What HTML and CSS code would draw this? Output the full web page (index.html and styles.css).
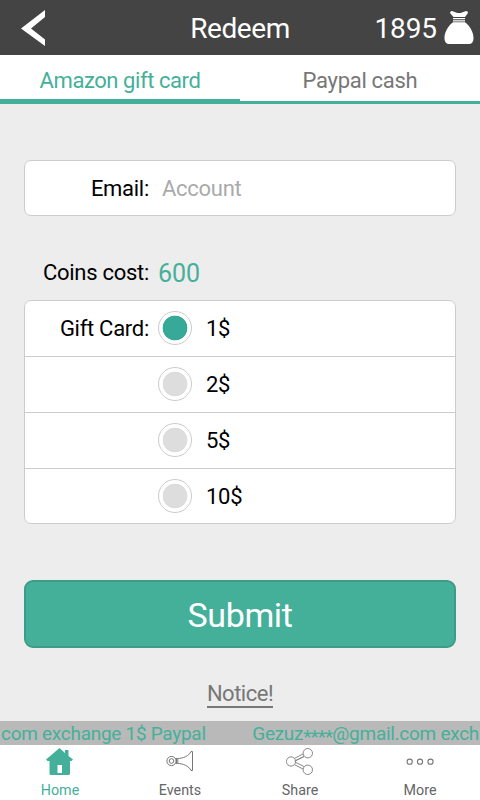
FILE: index.html
```html
<!DOCTYPE html>
<html lang="en">
<head>
<meta charset="utf-8">
<title>Redeem</title>
<link rel="stylesheet" href="styles.css">
</head>
<body>
<div class="app">
  <header class="header">
    <svg class="back" width="26" height="40" viewBox="0 0 26 40"><path d="M24 2v7L10 20.500l14 11V38L0 20.500z" fill="#fff"/></svg>
    <h1 class="title">Redeem</h1>
    <div class="balance">
      <span class="coins">1895</span>
      <svg width="30" height="34" viewBox="0 0 30 34" fill="#fff"><path d="M6 3Q6 1 8 1L12 2.500Q15 3.500 18 2.500L22 1Q24 1 24 3L21 7H9.500zM9 8h12v1.200H9zM9 10.200h12v1.300H9zM9 12.300H21C26 16 30 23 29.500 29Q29 34 25 34H5Q1 34 .5 29C0 23 4 16 9 12.300z"/></svg>
    </div>
  </header>
  <nav class="tabs">
    <a class="tab active"><span>Amazon gift card</span></a>
    <a class="tab"><span>Paypal cash</span></a>
  </nav>
  <main class="content">
    <div class="field">
      <span class="label">Email:</span><span class="placeholder">Account</span>
    </div>
    <div class="cost"><span class="label">Coins cost:</span><span class="amount">600</span></div>
    <div class="options">
      <div class="option"><span class="label">Gift Card:</span><i class="radio checked"></i><span>1$</span></div>
      <div class="option"><span class="label"></span><i class="radio"></i><span>2$</span></div>
      <div class="option"><span class="label"></span><i class="radio"></i><span>5$</span></div>
      <div class="option"><span class="label"></span><i class="radio"></i><span>10$</span></div>
    </div>
    <button class="submit"><span>Submit</span></button>
    <div class="notice"><span>Notice!</span></div>
  </main>
  <div class="ticker"><span class="entry">com exchange 1$ Paypal</span><span class="entry">Gezuz<span class="mask">****</span>@gmail.com exch</span></div>
  <footer class="bottom">
    <a class="item active">
      <svg width="28" height="28" viewBox="0 0 28 28"><path fill="#45b09a" fill-rule="evenodd" d="M0 11.500L13.500 0 19 5V2h3.500v6L27 11.500 25.500 13H24v12.500Q24 27 22.500 27H5Q3.500 27 3.500 25.500V13h-2zM11.500 17v8h4.500v-8z"/></svg>
      <span>Home</span>
    </a>
    <a class="item">
      <svg width="28" height="28" viewBox="0 0 28 28" fill="none" stroke="#777" stroke-width="1"><circle cx="5.500" cy="13" r="4.600"/><circle cx="5.500" cy="13" r="2.300"/><path d="M9.500 10.500h2C17 10.500 23 8 25 3.500h1.500v19H25C23 18 17 15.500 11.500 15.500h-2M10.500 11v4M11.800 11v4"/></svg>
      <span>Events</span>
    </a>
    <a class="item">
      <svg width="28" height="28" viewBox="0 0 28 28" fill="none" stroke="#888" stroke-width="1"><path d="M8.500 10.300L17 6M9.300 12.800L18 8.500L9.300 12.800V14.200L18 18.500M8.500 16.700L17 21"/><circle cx="5" cy="13.500" r="4.600"/><circle cx="21.800" cy="5.200" r="4.700"/><circle cx="21.800" cy="21.800" r="4.700"/></svg>
      <span>Share</span>
    </a>
    <a class="item">
      <svg width="28" height="28" viewBox="0 0 28 28" fill="none" stroke="#777" stroke-width="1.100"><circle cx="3.700" cy="13.700" r="2.600"/><circle cx="14" cy="13.700" r="2.600"/><circle cx="24.500" cy="13.700" r="2.600"/></svg>
      <span>More</span>
    </a>
  </footer>
</div>
</body>
</html>
```
FILE: styles.css
```css
* { box-sizing: border-box; }
body {
  margin: 0;
  font-family: Roboto, "Liberation Sans", sans-serif;
  background: #ededed;
}
.app {
  width: 480px;
  height: 800px;
  display: flex;
  flex-direction: column;
  overflow: hidden;
}
.header {
  height: 55px;
  flex: none;
  display: grid;
  grid-template-columns: 1fr auto 1fr;
  align-items: center;
  background: #444;
  color: #fff;
}
.back { margin-left: 21px; }
.title { margin: 0; font-size: 28px; line-height: 34px; font-weight: 400; letter-spacing: -.4px; padding-top: 3px; }
.balance { display: flex; justify-content: flex-end; align-items: center; gap: 7px; padding-right: 6px; }
.balance svg { margin-top: -2px; }
.coins { font-size: 28px; line-height: 34px; padding-top: 3px; letter-spacing: -.1px; }
.tabs { height: 49px; flex: none; display: flex; background: #fff; }
.tab {
  flex: 1;
  border-bottom: 3px solid #45b09a;
  text-align: center;
  font-size: 22px;
  line-height: 51px;
  letter-spacing: -.3px;
  color: #777;
}
.tab.active { border-bottom-width: 5px; color: #45b09a; letter-spacing: -.43px; }
.content { flex: 1; padding: 56px 24px 0; font-size: 22px; letter-spacing: -.28px; }
.label { width: 125px; text-align: right; color: #000; }
.field {
  height: 56px;
  display: flex;
  background: #fff;
  border: 1px solid #ccc;
  border-radius: 7px;
  line-height: 56px;
}
.field .label, .option .label { width: 124px; }
.placeholder { margin-left: 13px; color: #aaa; }
.cost { height: 84px; display: flex; padding-top: 41px; line-height: 32px; }
.amount { margin-left: 9px; font-size: 25px; line-height: 34px; letter-spacing: 0; color: #45b09a; }
.options {
  background: #fff;
  border: 1px solid #ccc;
  border-radius: 7px;
  height: 224px;
}
.option { height: 56px; display: flex; align-items: center; border-bottom: 1px solid #ccc; line-height: 56px; }
.option:last-child { border-bottom: 0; height: 55px; }
.radio {
  width: 34px;
  height: 34px;
  margin: -1px 14px 0 9px;
  border: 1px solid #ccc;
  border-radius: 50%;
  background: radial-gradient(circle, #ddd 12px, transparent 12.700px);
}
.radio.checked { background: radial-gradient(circle, #36a998 12px, transparent 12.700px); }
.submit {
  display: block;
  width: 432px;
  height: 68px;
  margin: 56px 0 0;
  padding: 2px 0 0;
  border: 2px solid #3c9c87;
  border-radius: 9px;
  background: #45b09a;
  color: #fff;
  font: 34px/60px Roboto, sans-serif;
  letter-spacing: -.4px;
}
.notice { padding-top: 33px; text-align: center; color: #777; line-height: 26px; letter-spacing: -.5px; }
.notice span { display: inline-block; height: 27px; border-bottom: 2px solid #777; }
.ticker {
  height: 24px;
  flex: none;
  display: flex;
  justify-content: space-between;
  background: #b9b9b9;
  color: #45b09a;
  font-size: 19px;
  line-height: 25px;
  letter-spacing: -.28px;
  white-space: nowrap;
  padding: 0 1px;
}
.mask { position: relative; top: 3px; letter-spacing: -.9px; }
.bottom { height: 55px; flex: none; display: flex; background: #fff; }
.item {
  flex: 1;
  display: flex;
  flex-direction: column;
  align-items: center;
  padding-top: 3px;
  font-size: 14.300px;
  line-height: 28px;
  color: #666;
}
.item svg { flex: none; }
.item.active { color: #45b09a; }
```
